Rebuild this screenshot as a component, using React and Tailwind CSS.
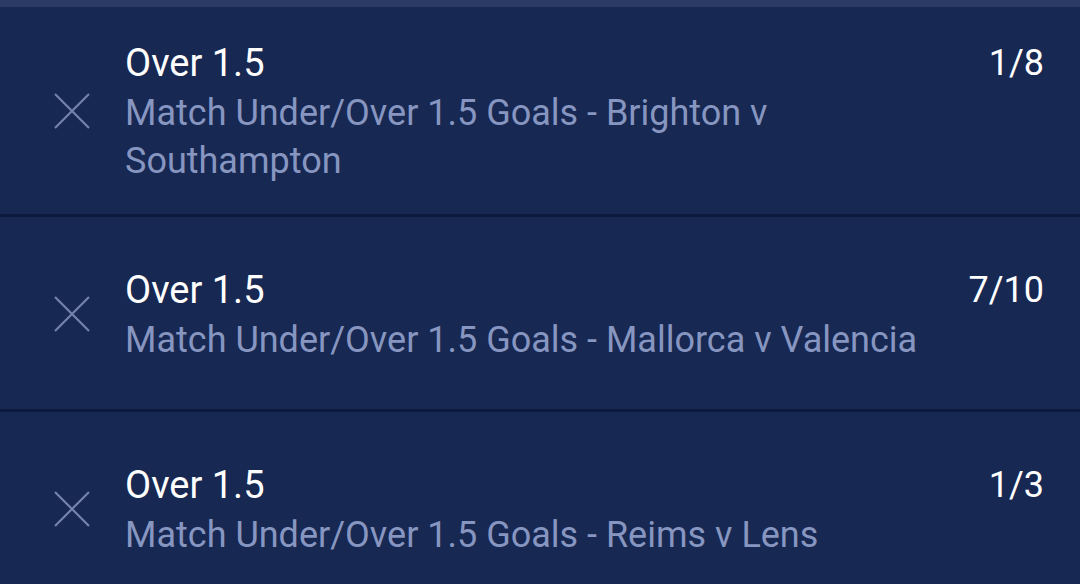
const bets = [
  {
    id: 1,
    selection: "Over 1.5",
    market: "Match Under/Over 1.5 Goals - Brighton v Southampton",
    odds: "1/8",
  },
  {
    id: 2,
    selection: "Over 1.5",
    market: "Match Under/Over 1.5 Goals - Mallorca v Valencia",
    odds: "7/10",
  },
  {
    id: 3,
    selection: "Over 1.5",
    market: "Match Under/Over 1.5 Goals - Reims v Lens",
    odds: "1/3",
  },
];

const CloseIcon = () => (
  <svg width="36" height="36" viewBox="0 0 36 36" fill="none">
    <path
      d="M1 1L35 35M35 1L1 35"
      stroke="#7282aa"
      strokeWidth="2.2"
      strokeLinecap="butt"
    />
  </svg>
);

const BetRow = ({ bet }) => (
  <div className="flex items-center min-h-[195px] pt-[30px] pb-[29px] pl-[54px] pr-[36px] border-b-[3px] border-[#0c1a3e]">
    <button className="shrink-0 w-[36px] h-[36px] mr-[35px]">
      <CloseIcon />
    </button>
    <div className="flex-1 min-w-0">
      <div className="flex justify-between items-start gap-6">
        <span className="text-white text-[38px] leading-[52px]">
          {bet.selection}
        </span>
        <span className="text-white text-[36px] leading-[52px]">
          {bet.odds}
        </span>
      </div>
      <p className="text-[#8796c0] text-[36px] leading-[48px] pr-[90px]">
        {bet.market}
      </p>
    </div>
  </div>
);

export default function App() {
  return (
    <div
      className="w-[1080px] h-[584px] overflow-hidden bg-[#172852]"
      style={{ fontFamily: "Roboto, 'Noto Sans', sans-serif" }}
    >
      <div className="h-[7px] bg-[#2b3b65]" />
      {bets.map((bet) => (
        <BetRow key={bet.id} bet={bet} />
      ))}
    </div>
  );
}
